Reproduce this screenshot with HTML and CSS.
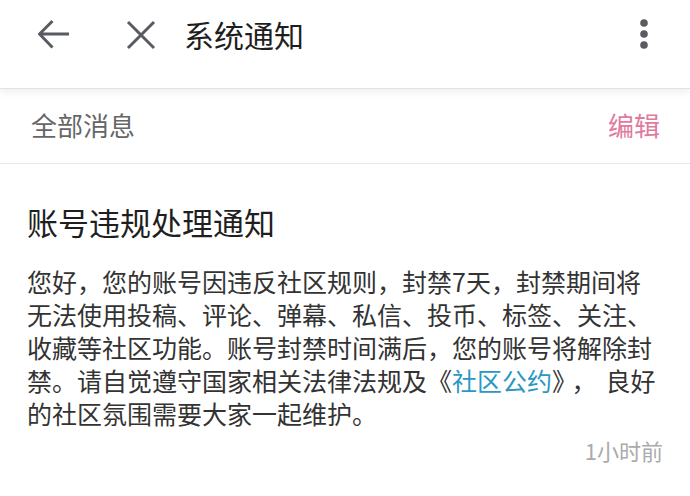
FILE: index.html
```html
<!DOCTYPE html>
<html lang="zh-CN">
<head>
<meta charset="utf-8">
<title>系统通知</title>
<link rel="stylesheet" href="styles.css">
</head>
<body>
<header class="topbar">
  <div class="topbar-row">
    <svg class="icon-back" width="32" height="32" viewBox="0 0 32 32" aria-hidden="true">
      <path d="M31 16H2M14.5 3L1.5 16L14.5 29.5" fill="none" stroke="#585b60" stroke-width="3" stroke-linecap="butt" stroke-linejoin="miter"/>
    </svg>
    <svg class="icon-close" width="30" height="30" viewBox="0 0 30 30" aria-hidden="true">
      <path d="M2 2L28 28M28 2L2 28" fill="none" stroke="#585b60" stroke-width="3"/>
    </svg>
    <h1 class="topbar-title">系统通知</h1>
    <svg class="icon-more" width="10" height="32" viewBox="0 0 10 32" aria-hidden="true">
      <circle cx="5" cy="5" r="3.8" fill="#5a5c60"/>
      <circle cx="5" cy="16" r="3.8" fill="#5a5c60"/>
      <circle cx="5" cy="27" r="3.8" fill="#5a5c60"/>
    </svg>
  </div>
</header>
<div class="filterbar">
  <span class="filter-label">全部消息</span>
  <span class="filter-edit">编辑</span>
</div>
<article class="notice">
  <h2 class="notice-title">账号违规处理通知</h2>
  <p class="notice-body">您好，您的账号因违反社区规则，封禁7天，封禁期间将无法使用投稿、评论、弹幕、私信、投币、标签、关注、收藏等社区功能。账号封禁时间满后，您的账号将解除封禁。请自觉遵守国家相关法律法规及《<a class="notice-link">社区公约</a>》<span class="comma">，</span>良好的社区氛围需要大家一起维护。</p>
  <div class="notice-time">1小时前</div>
</article>
</body>
</html>
```

FILE: styles.css
```css
* {
  box-sizing: border-box;
}

html, body {
  margin: 0;
  padding: 0;
  background: #ffffff;
}

body {
  font-family: "Noto Sans CJK SC", "Noto Sans", sans-serif;
  width: 690px;
  height: 496px;
  overflow: hidden;
}

.topbar {
  position: relative;
  z-index: 2;
  height: 89px;
  background: #ffffff;
  border-bottom: 1px solid #e2e2e2;
  box-shadow: 0 3px 8px rgba(0, 0, 0, 0.07);
}

.topbar-row {
  height: 68px;
  display: flex;
  align-items: center;
  padding-left: 38px;
  padding-right: 41px;
}

.icon-back {
  display: block;
  flex: none;
}

.icon-close {
  display: block;
  flex: none;
  margin-left: 56px;
  margin-top: 1px;
}

.topbar-title {
  margin: 0 0 0 28px;
  font-size: 30px;
  font-weight: 400;
  color: #1e1e1e;
  line-height: 40px;
  flex: 1;
}

.icon-more {
  display: block;
  flex: none;
}

.filterbar {
  height: 75px;
  display: flex;
  align-items: center;
  justify-content: space-between;
  padding: 0 30px 2px 31px;
  border-bottom: 1px solid #e8e8e8;
}

.filter-label {
  font-size: 26px;
  color: #666666;
  line-height: 34px;
}

.filter-edit {
  font-size: 26px;
  color: #e07aa0;
  line-height: 34px;
}

.notice {
  padding: 0 27px;
}

.notice-title {
  margin: 37px 0 0 0;
  font-size: 31px;
  font-weight: 400;
  color: #1f1f1f;
  line-height: 42px;
}

.notice-body {
  margin: 22px 0 0 0;
  font-size: 25px;
  line-height: 33px;
  color: #333333;
}

.notice-link {
  color: #2a98c2;
  text-decoration: none;
}

.comma {
  margin: 0 9px 0 7px;
}

.notice-time {
  margin-top: 5px;
  text-align: right;
  font-size: 22px;
  line-height: 30px;
  color: #ababab;
}
```
